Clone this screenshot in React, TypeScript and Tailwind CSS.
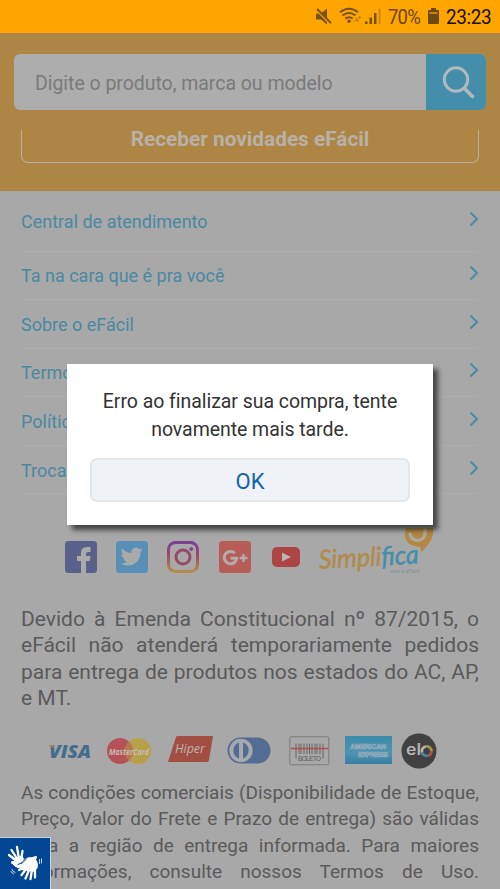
import React from "react";

const links = [
  "Central de atendimento",
  "Ta na cara que é pra você",
  "Sobre o eFácil",
  "Termos",
  "Política",
  "Trocas",
];

function StatusBar() {
  return (
    <header className="flex h-[33px] items-center justify-end bg-[#ffa500] pr-[9px] text-[#795213]">
      <svg className="h-[33px] w-[66px]" viewBox="315 0 66 33" fill="currentColor">
        <path d="M316 13.500h5l6-5v16l-6-5h-5z" />
        <path d="M316 9l14.500 14.500" stroke="#ffa500" strokeWidth="3" />
        <path d="M317 9l14 14" stroke="currentColor" strokeWidth="2" />
        <g fill="none" stroke="currentColor" strokeWidth="2">
          <path d="M340 12.200q9-7 18 0M342.500 15.500q6.500-5 13 0M345.300 18.600q3.700-2.700 7.400 0" />
        </g>
        <circle cx="349" cy="21.300" r="1.700" />
        <path d="M353 21h3v-2.500h1.200V21h2.300M358 17.500h3M359.500 16v3" fill="none" stroke="#c78215" strokeWidth="1.200" />
        <path d="M365 21.500h2.500V24H365zM369.500 17.500h2.500V24h-2.500zM374 13h2.500v11H374z" />
        <path d="M378.700 8.500h1.800V24h-1.800z" fill="#c58318" />
      </svg>
      <span className="ml-[7px] w-[33px] font-['Roboto',sans-serif] text-[21px] leading-[33px] tracking-[-0.900px] whitespace-nowrap text-[#6b470f]">
        <span className="inline-block origin-left translate-y-[1px] scale-x-[0.880]">70%</span>
      </span>
      <svg className="ml-[7px] h-[17px] w-[11px]" viewBox="0 0 11 17">
        <path d="M3 0h5v2h2q1 0 1 1v12q0 1-1 1H1q-1 0-1-1V3q0-1 1-1h2z" fill="#6f4a10" />
        <path d="M1.500 4h8v2h-8z" fill="#c38219" />
      </svg>
      <span className="ml-[7px] w-[45px] font-['Roboto',sans-serif] text-[21px] leading-[33px] tracking-[-0.400px] whitespace-nowrap text-[#171006]">
        <span className="inline-block origin-left translate-y-[1px] scale-x-[0.900]">23:23</span>
      </span>
    </header>
  );
}

function SearchHeader() {
  return (
    <section className="h-[158px] bg-[#ad8545] px-[14px] pt-[21px]">
      <div className="flex h-[56px] overflow-hidden rounded-[6px] bg-[#adadad]">
        <div className="flex flex-1 items-center pt-[4px] pl-[21px] text-[19.500px] tracking-[-0.040px] whitespace-nowrap text-[#7a7a7a]">
          Digite o produto, marca ou modelo
        </div>
        <div className="w-[60px] bg-[#438eab]">
          <svg className="size-full" viewBox="0 0 60 56" fill="none" stroke="#b0b8bc">
            <circle cx="30" cy="25.500" r="11.700" strokeWidth="3" />
            <path d="M38.500 34.500l8 8" strokeWidth="3.600" strokeLinecap="round" />
          </svg>
        </div>
      </div>
      <div className="mx-[7px] mt-[20px] flex h-[33px] items-start justify-center rounded-b-[7px] border border-t-0 border-[#b9b0a5] text-[20.800px] leading-[18px] font-bold whitespace-nowrap text-[#b9b1a7]">
        Receber novidades eFácil
      </div>
    </section>
  );
}

function Chevron() {
  return (
    <svg className="mt-[-5px] h-[16px] w-[10px]" viewBox="0 0 10 16" fill="none" stroke="#4a8ba4" strokeWidth="2">
      <path d="M1.500 1.500L8 8l-6.500 6.500" />
    </svg>
  );
}

function SocialRow() {
  return (
    <div className="mx-[-21px] mt-[32px] flex h-[50px] pl-[65px]">
      <svg className="mt-[15px] size-[32px]" viewBox="0 0 32 32">
        <rect width="32" height="32" rx="3.500" fill="#59618a" />
        <path d="M16 32V20h-4v-5h4v-3q0-6 6-6h3.500v5H23q-2 0-2 2v2h4.500l-.7 5H21v12z" fill="#aaa" />
      </svg>
      <svg className="mt-[15px] ml-[19px] size-[32px]" viewBox="0 0 32 32">
        <rect width="32" height="32" rx="3.500" fill="#578fb6" />
        <path
          transform="translate(4.700 4.500) scale(.92)"
          d="M23.950 4.570a10 10 0 01-2.820.77 4.960 4.960 0 002.160-2.720c-.95.550-2 .950-3.130 1.180a4.920 4.920 0 00-8.380 4.480C7.690 8.100 4.070 6.130 1.640 3.160a4.820 4.820 0 00-.67 2.480c0 1.710.87 3.210 2.190 4.100a4.900 4.900 0 01-2.230-.62v.06a4.920 4.920 0 003.950 4.830 5 5 0 01-2.210.080 4.940 4.940 0 004.600 3.420A9.870 9.870 0 010 19.540a14 14 0 007.550 2.210c9.050 0 14-7.500 14-13.980 0-.21 0-.42-.02-.63a9.940 9.940 0 002.460-2.550z"
          fill="#aaa"
        />
      </svg>
      <svg className="mt-[14px] ml-[19px] h-[34px] w-[32px]" viewBox="0 0 32 34" fill="none">
        <defs>
          <linearGradient id="insta" x1="0" y1="0" x2="0" y2="1">
            <stop stopColor="#774293" />
            <stop offset=".45" stopColor="#a04867" />
            <stop offset="1" stopColor="#b28c48" />
          </linearGradient>
        </defs>
        <rect x="1.500" y="2.500" width="29" height="29" rx="7" stroke="url(#insta)" strokeWidth="3" />
        <circle cx="16" cy="17" r="7" stroke="#984967" strokeWidth="3" />
        <circle cx="24.300" cy="9" r="1.900" fill="#854590" />
      </svg>
      <svg className="mt-[15px] ml-[20px] size-[32px]" viewBox="0 0 32 32" fill="none">
        <rect width="32" height="32" rx="3.500" fill="#b85c57" />
        <path d="M15.900 12.300a6.200 6.200 0 101.700 5H11.500" stroke="#b3acac" strokeWidth="3" />
        <path d="M24.500 13v8M20.500 17h8" stroke="#b3acac" strokeWidth="2.400" />
      </svg>
      <svg className="mt-[21px] ml-[21px] h-[20px] w-[28px]" viewBox="0 0 28 20">
        <rect width="28" height="20" rx="5" fill="#ae4545" />
        <path d="M10 5.500l9 4.500-9 4.500z" fill="#bcb3b3" />
      </svg>
      <svg className="mt-[2px] ml-[18px] h-[50px] w-[120px]" viewBox="0 0 120 50">
        <path d="M88 0h27q2 12-12 24l-.5-5q-16-1-15.500-13 0-3 1-6z" fill="#b28843" />
        <path d="M92 6q2 8 10 6 6-2 5-10" fill="none" stroke="#aeaaa2" strokeWidth="3.200" strokeLinecap="round" />
        <g transform="rotate(-3 52 35)">
          <text
            x="1"
            y="38"
            textLength="100"
            lengthAdjust="spacingAndGlyphs"
            className="font-['Lato',sans-serif] text-[26px] italic"
            fill="#b08b4b"
            stroke="#b08b4b"
            strokeWidth=".5"
          >
            Simpli<tspan fill="#438ea8" stroke="#438ea8">fica</tspan>
          </text>
        </g>
        <text x="72" y="45" textLength="29" className="font-['Lato',sans-serif] text-[5px]" fill="#7d8d93">
          com o eFácil
        </text>
      </svg>
    </div>
  );
}

function PaymentRow() {
  return (
    <div className="mx-[-21px] mt-[21px] flex h-[36px] items-center pl-[47px]">
      <svg className="h-[24px] w-[46px]" viewBox="0 0 46 24">
        <text x="2" y="18.500" textLength="42" lengthAdjust="spacingAndGlyphs" className="font-['Open_Sans',sans-serif] text-[18px] font-extrabold italic" fill="#426d8b">
          VISA
        </text>
        <path d="M1 6h5l2.500 5Q6 7.500 1 6z" fill="#ad8144" />
      </svg>
      <svg className="ml-[14px] h-[26px] w-[44px]" viewBox="0 0 44 26">
        <circle cx="13" cy="13" r="13" fill="#b55257" />
        <circle cx="31" cy="13" r="13" fill="#b7a04b" />
        <path d="M22 3.500a13 13 0 010 19 13 13 0 010-19" fill="#b57851" />
        <text x="2" y="16.500" textLength="40" lengthAdjust="spacingAndGlyphs" className="font-['Open_Sans',sans-serif] text-[9px] font-bold italic" fill="#c4beb6">
          MasterCard
        </text>
      </svg>
      <svg className="mt-[-4px] ml-[17px] h-[26px] w-[45px]" viewBox="0 0 45 26">
        <path d="M8 1Q8.500 0 10 0h35l-4 24q-.5 2-2 2H0z" fill="#a34e43" />
        <text x="7" y="17" textLength="30" lengthAdjust="spacingAndGlyphs" className="font-['Open_Sans',sans-serif] text-[13px] font-medium italic" fill="#bfb3af">
          Hiper
        </text>
      </svg>
      <svg className="ml-[14px] h-[27px] w-[44px]" viewBox="0 0 44 27">
        <rect x=".5" y=".5" width="43" height="26" rx="13" fill="#536c92" />
        <circle cx="14" cy="13.500" r="11.700" fill="#a6a9ad" />
        <path d="M12 5.500v16a8.500 8.500 0 010-16zM16 5.500v16a8.500 8.500 0 000-16z" fill="#536c92" />
      </svg>
      <svg className="mt-[1px] ml-[18px] h-[30px] w-[41px]" viewBox="0 0 41 30" fill="none">
        <rect x=".8" y=".8" width="39" height="28" rx="1.500" stroke="#797979" />
        <path
          d="M7 7.500v15M10 7.500v10.500M12 7.500v10.500M15 7.500v10.500M18 7.500v10.500M20.500 7.500v10.500M23 7.500v10.500M26 7.500v10.500M28 7.500v10.500M31 7.500v10.500M34 7.500v15"
          stroke="#686565"
        />
        <path d="M2 12.500h37" stroke="#b44e4c" strokeWidth="1.500" />
        <text x="9" y="25" textLength="23" className="font-['Liberation_Sans',sans-serif] text-[6.500px]" fill="#595959">
          BOLETO
        </text>
      </svg>
      <svg className="mt-[-2px] ml-[15px] h-[28px] w-[47px]" viewBox="0 0 47 28">
        <defs>
          <linearGradient id="amex" x1="0" y1="0" x2="0" y2="1">
            <stop stopColor="#3a8bac" />
            <stop offset=".6" stopColor="#5093b2" />
            <stop offset="1" stopColor="#367ea2" />
          </linearGradient>
        </defs>
        <rect width="47" height="28" fill="url(#amex)" />
        <g className="font-['Liberation_Sans',sans-serif] text-[7px] font-bold" fill="#4385a5" stroke="#93aebb" strokeWidth=".7">
          <text x="5" y="13" textLength="36">AMERICAN</text>
          <text x="13" y="21" textLength="30">EXPRESS</text>
        </g>
      </svg>
      <svg className="ml-[9px] size-[36px]" viewBox="0 0 36 36">
        <circle cx="18" cy="18" r="17.500" fill="#424141" />
        <text x="5" y="22" textLength="15" lengthAdjust="spacingAndGlyphs" className="font-['Inter',sans-serif] text-[16px] font-semibold" fill="#b5b5b5">
          el
        </text>
        <g fill="none" strokeWidth="2.700">
          <path d="M21 19.500a4.700 4.700 0 014-6" stroke="#b5b5b5" />
          <path d="M25 13.500a4.700 4.700 0 015.500 4.500" stroke="#aa9546" />
          <path d="M30.500 18a4.700 4.700 0 01-4 4.700" stroke="#ad5249" />
          <path d="M26.500 22.700a4.700 4.700 0 01-5.500-3.200" stroke="#438ba6" />
        </g>
      </svg>
    </div>
  );
}

function Line({ children }: { children: React.ReactNode }) {
  return <span className="block whitespace-nowrap [text-align-last:justify]">{children}</span>;
}

function Dialog() {
  return (
    <div className="absolute top-[364px] left-[67px] flex h-[161px] w-[366px] flex-col items-center bg-white pt-[24px] shadow-[5px_5px_5px_rgba(0,0,0,0.6)]">
      <p className="text-center text-[19.500px] leading-[28px] tracking-[-0.050px] whitespace-nowrap text-[#333]">
        Erro ao finalizar sua compra, tente
        <br />
        novamente mais tarde.
      </p>
      <button className="mt-[14px] h-[44px] w-[320px] rounded-[7px] border-2 border-[#e4e6e8] bg-[#eff3f7] text-[22px] leading-[43px] text-[#1261ae]">
        OK
      </button>
    </div>
  );
}

function SignLanguageButton() {
  return (
    <div className="absolute top-[837px] left-0 h-[52px] w-[51px] border-t border-r border-[#c5d4e4] bg-[#034693]">
      <svg className="size-full" viewBox="0 0 50 51" fill="none" stroke="white" strokeLinecap="round" strokeLinejoin="round">
        <path d="M15.500 22L9 17M16 19l-4.500-7M18.500 18L17 9M21.500 19l1-6" strokeWidth="2.300" />
        <path d="M14.500 20.500l7.500-2.500 1.500 3-3 4.500 3 2-4 2.500q-5-1-7-4.500l2-1z" fill="white" strokeWidth="1" />
        <path d="M12.500 24.500l3 .5" strokeWidth="3" />
        <path d="M23 24q4-5 8-4l5-1.500q1 1-1 3 3 3 2 8l-3 3.500-8-1-4-.5z" fill="white" strokeWidth="1.300" />
        <path d="M25 29l-6 3M27 30l-5.500 7M29.500 31l-4 9.500M32 31.500l-1.500 9.500M35 30v9.500" strokeWidth="2.300" />
        <path d="M18 26.500q5-1 8.500-5.500" stroke="#034693" strokeWidth="1" />
        <path d="M39.500 21.500v4M41.500 21v4M12 31.500q.5 2.500 3 3M11 33.500q1 2 2.500 2.500" strokeWidth=".8" />
      </svg>
    </div>
  );
}

export default function App() {
  return (
    <div className="relative h-[889px] w-[500px] overflow-hidden bg-[#a8a8a8] font-['Roboto',sans-serif]">
      <StatusBar />
      <SearchHeader />
      <main className="px-[21px] text-[#5a5a5a]">
        <ul>
          {links.map((label, i) => (
            <li
              key={label}
              className={
                "flex items-center justify-between border-b border-[#aeaeae] text-[18px] text-[#4a88a0] " +
                (i === 0 ? "h-[60.500px] pt-[2px]" : "h-[48.600px] pt-[1px]")
              }
            >
              <span className="whitespace-nowrap">{label}</span>
              <Chevron />
            </li>
          ))}
        </ul>
        <SocialRow />
        <p className="mt-[29.300px] text-[21px] leading-[26.500px]">
          <Line>Devido à Emenda Constitucional nº 87/2015, o</Line>
          <Line>eFácil não atenderá temporariamente pedidos</Line>
          <Line>para entrega de produtos nos estados do AC, AP,</Line>
          <span className="block">e MT.</span>
        </p>
        <PaymentRow />
        <p className="mt-[11.200px] text-[19px] leading-[26.300px]">
          <Line>As condições comerciais (Disponibilidade de Estoque,</Line>
          <Line>Preço, Valor do Frete e Prazo de entrega) são válidas</Line>
          <Line>para a região de entrega informada. Para maiores</Line>
          <Line>informações, consulte nossos Termos de Uso.</Line>
        </p>
      </main>
      <SignLanguageButton />
      <Dialog />
    </div>
  );
}
